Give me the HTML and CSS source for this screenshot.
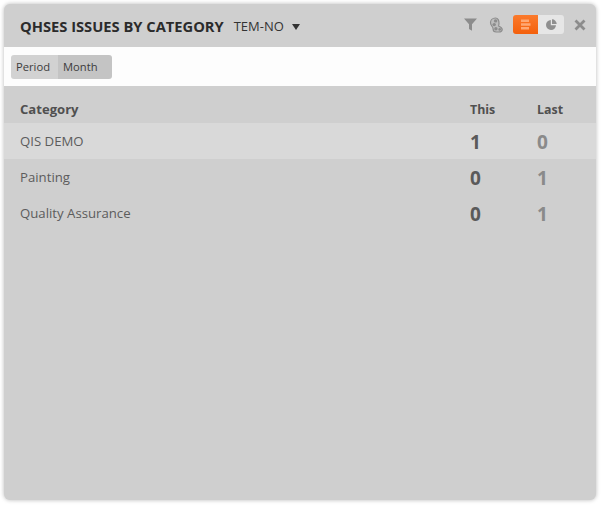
FILE: index.html
```html
<!DOCTYPE html>
<html lang="en">
<head>
<meta charset="utf-8">
<title>QHSES Issues by Category</title>
<link rel="stylesheet" href="styles.css">
</head>
<body>
<section class="panel">
  <header class="head">
    <h1 class="title">QHSES ISSUES BY CATEGORY</h1>
    <span class="scope">TEM-NO</span>
    <span class="caret"></span>
    <div class="tools">
      <svg class="ico-filter" width="13" height="13" viewBox="0 0 13 13"><path d="M0 0.500H13L8 6.200V12.800L5 11V6.200Z" fill="#8c8c8c"/></svg>
      <svg class="ico-palette" width="14" height="16" viewBox="0 0 14 16"><path d="M6.500 1C3.500 1 1.500 3.200 1.500 5.800c0 1.700.9 2.700 1.700 3.700.7.900.9 1.700.9 2.600 0 1.700 1.200 2.900 3 2.900h2.700c2 0 3.400-1 3.400-2.500 0-1.800-1.700-2.600-3.300-3.200C9.200 8.600 10 7.800 10 6.400 10 3.500 9 1 6.500 1Z" fill="#bdbdbd" stroke="#8c8c8c" stroke-width="1.200"/><circle cx="6.600" cy="3.900" r="1.700" fill="#8c8c8c"/><circle cx="5.200" cy="7.600" r="1.700" fill="#8c8c8c"/><circle cx="6.900" cy="11.700" r="1.700" fill="#8c8c8c"/><circle cx="10.700" cy="12.400" r="1.300" fill="#8c8c8c"/></svg>
      <div class="switch">
        <span class="sw sw-on"><svg width="11" height="11" viewBox="0 0 11 11"><path d="M1 0.500H9V3H1ZM1 4.200H10.500V6.800H1ZM1 8H9V10.500H1Z" fill="#ffa873"/></svg></span>
        <span class="sw sw-off"><svg width="11" height="11" viewBox="0 0 11 11"><path d="M4.800 1V6.200H10A5 5 0 1 1 4.800 1Z" fill="#8f8f8f"/><path d="M6 0.300A4.800 4.800 0 0 1 10.700 5H6Z" fill="#8f8f8f"/></svg></span>
      </div>
      <svg class="ico-close" width="12" height="12" viewBox="0 0 12 12"><path d="M1.500 1.500L10.500 10.500M10.500 1.500L1.500 10.500" stroke="#8c8c8c" stroke-width="2.800"/></svg>
    </div>
  </header>
  <div class="bar">
    <div class="seg"><span class="seg-a">Period</span><span class="seg-b">Month</span></div>
  </div>
  <table class="grid">
    <thead>
      <tr><th class="c-name">Category</th><th class="c-this">This</th><th class="c-last">Last</th></tr>
    </thead>
    <tbody>
      <tr class="hot"><td class="c-name">QIS DEMO</td><td class="c-this num">1</td><td class="c-last num">0</td></tr>
      <tr><td class="c-name">Painting</td><td class="c-this num">0</td><td class="c-last num">1</td></tr>
      <tr><td class="c-name">Quality Assurance</td><td class="c-this num">0</td><td class="c-last num">1</td></tr>
    </tbody>
  </table>
</section>
</body>
</html>
```
FILE: styles.css
```css
* { box-sizing: border-box; }
html, body { margin: 0; padding: 0; background: #fff; }
body {
  width: 601px;
  height: 509px;
  padding: 4px 5px 9px 4px;
  font-family: "Open Sans", "Liberation Sans", sans-serif;
  overflow: hidden;
}
.panel {
  height: 496px;
  background: #cfcfcf;
  border-radius: 6px;
  box-shadow: 0 0 4px rgba(0, 0, 0, 0.28);
  overflow: hidden;
}
.head {
  height: 43px;
  display: flex;
  align-items: center;
  padding: 0 10px 0 16px;
}
.title {
  margin: 0;
  font-size: 14.7px;
  font-weight: 700;
  color: #2b2b2b;
}
.scope {
  margin-left: 10px;
  font-size: 13px;
  color: #333;
}
.caret {
  margin-left: 8px;
  margin-top: 2px;
  border-left: 4px solid transparent;
  border-right: 4px solid transparent;
  border-top: 6px solid #333;
}
.tools {
  margin-left: auto;
  display: flex;
  align-items: center;
  padding-bottom: 2px;
}
.ico-filter { margin-right: 12px; }
.ico-palette { margin-right: 10px; }
.switch {
  display: flex;
  width: 51px;
  height: 19px;
  border-radius: 3px;
  overflow: hidden;
  margin-right: 10px;
}
.sw { display: flex; align-items: center; justify-content: center; }
.sw-on { width: 25px; background: linear-gradient(#fb7a2c, #f4600c); }
.sw-off { width: 26px; background: #e6e6e6; }
.bar {
  height: 39px;
  background: #fdfdfd;
  display: flex;
  align-items: center;
  padding-left: 7px;
}
.seg {
  display: flex;
  height: 24px;
  border-radius: 3px;
  overflow: hidden;
  font-size: 11.2px;
  line-height: 24px;
  color: #3c3c3c;
}
.seg-a { width: 47px; padding-left: 5px; background: #d2d2d2; }
.seg-b { width: 54px; padding-left: 5px; background: #c4c4c4; }
.grid {
  width: 100%;
  border-collapse: collapse;
  table-layout: fixed;
  color: #5c5c5c;
}
.grid th {
  height: 37px;
  padding: 9px 0 0;
  font-size: 12.4px;
  font-weight: 700;
  text-align: left;
  color: #505050;
}
.grid th.c-name { font-size: 13.1px; padding-top: 8px; }
.grid td {
  height: 36px;
  padding: 0;
  font-size: 13.2px;
}
.c-name { padding-left: 16px !important; }
.c-this { width: 67px; }
.c-last { width: 59px; }
.grid .num { font-size: 19px; font-weight: 700; padding-top: 2px; }
td.c-this { color: #5a5a5a; }
td.c-last { color: #8a8a8a; }
.hot { background: #d9d9d9; }
```
